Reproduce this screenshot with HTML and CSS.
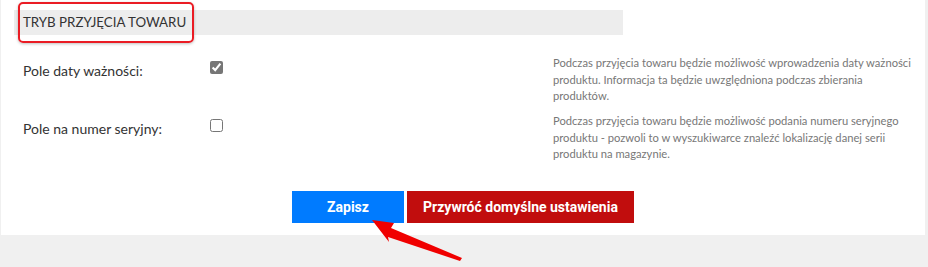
FILE: index.html
```html
<!DOCTYPE html>
<html lang="pl">
<head>
    <meta charset="UTF-8">
    <meta name="viewport" content="width=device-width, initial-scale=1.0">
    <title>Tryb przyjęcia towaru</title>
    <link rel="stylesheet" href="styles.css">
</head>
<body>
    <div class="page">
        <div class="panel">
            <div class="section-title">
                <span class="title-text">TRYB PRZYJĘCIA TOWARU</span>
                <span class="highlight"></span>
            </div>

            <div class="options">
                <div class="option">
                    <label class="option-label" for="expiry">Pole daty ważności:</label>
                    <div class="option-check">
                        <input type="checkbox" id="expiry" checked>
                    </div>
                    <p class="option-desc">Podczas przyjęcia towaru będzie możliwość wprowadzenia daty ważności produktu. Informacja ta będzie uwzględniona podczas zbierania produktów.</p>
                </div>

                <div class="option">
                    <label class="option-label" for="serial">Pole na numer seryjny:</label>
                    <div class="option-check">
                        <input type="checkbox" id="serial">
                    </div>
                    <p class="option-desc">Podczas przyjęcia towaru będzie możliwość podania numeru seryjnego produktu - pozwoli to w wyszukiwarce znaleźć lokalizację danej serii produktu na magazynie.</p>
                </div>
            </div>

            <div class="actions">
                <button class="btn btn-save">Zapisz</button>
                <button class="btn btn-reset">Przywróć domyślne ustawienia</button>
            </div>
        </div>

        <svg class="arrow" width="110" height="57" viewBox="0 0 110 57">
            <path d="M12 11 L34 14 L31 19 L102 49 L100 52 L28 28 L29 33 Z" fill="#f00000"/>
        </svg>
    </div>
</body>
</html>
```

FILE: styles.css
```css
html, body {
    height: 100%;
}
body {
    margin: 0;
    background-color: #f0f0f0;
    font-family: Lato, "Open Sans", sans-serif;
}
.page {
    position: relative;
    height: 267px;
}
.panel {
    width: 924px;
    height: 235px;
    margin-left: 1px;
    background: white;
    box-sizing: border-box;
    padding-top: 10px;
}
.section-title {
    position: relative;
    width: 609px;
    height: 25px;
    margin-left: 13px;
    padding-left: 9px;
    background: #ededed;
    box-sizing: border-box;
    color: #333;
    font-size: 13.3px;
    line-height: 25px;
}
.highlight {
    position: absolute;
    left: 4px;
    top: -8px;
    width: 172px;
    height: 37px;
    border: 2px solid #ea1c24;
    border-radius: 5px;
    box-shadow: 0 1px 3px rgba(0, 0, 0, 0.25);
}
.options {
    margin-top: 20px;
}
.option {
    display: grid;
    grid-template-columns: 187px 343px 365px;
    margin-left: 22px;
    height: 58px;
}
.option-label {
    color: #333;
    font-size: 14px;
    padding-top: 7px;
}
.option-check {
    padding-top: 3px;
}
.option-check input {
    margin: 0;
    width: 13px;
    height: 13px;
    accent-color: #767676;
}
.option-desc {
    margin: 0;
    color: #777;
    font-size: 11.2px;
    line-height: 16.5px;
}
.actions {
    display: flex;
    justify-content: center;
    gap: 3px;
    margin-top: 20px;
}
.btn {
    height: 32px;
    border: none;
    color: white;
    font-family: Roboto, sans-serif;
    font-weight: bold;
    font-size: 14px;
    cursor: pointer;
}
.btn-save {
    width: 112px;
    background: #007bff;
}
.btn-reset {
    width: 227px;
    background: #c10d0d;
}
.arrow {
    position: absolute;
    left: 360px;
    top: 209px;
    z-index: 1;
}
```
